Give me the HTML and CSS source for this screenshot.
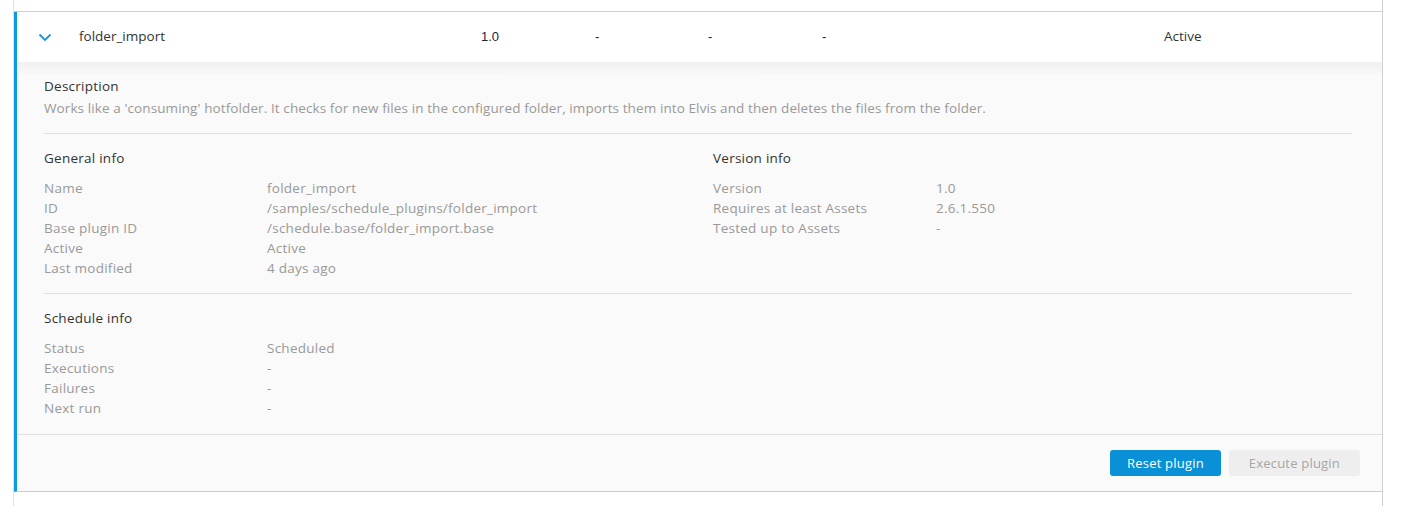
FILE: index.html
```html
<!DOCTYPE html>
<html>
<head>
    <title>Plugins</title>
    <link rel="stylesheet" href="styles.css">
</head>
<body>
    <div class="plugin-list">
        <div class="plugin-prev"></div>
        <div class="plugin open">
            <div class="plugin-row">
                <div class="cell toggle">
                    <svg width="14" height="9" viewBox="0 0 14 9"><polyline points="1.5,1.5 7,7 12.5,1.5" fill="none" stroke="#1a96d4" stroke-width="1.8"/></svg>
                </div>
                <div class="cell">folder_import</div>
                <div class="cell num">1.0</div>
                <div class="cell num">-</div>
                <div class="cell num">-</div>
                <div class="cell num">-</div>
                <div class="cell">Active</div>
            </div>
            <div class="plugin-details">
                <div class="section">
                    <div class="section-title">Description</div>
                    <p class="description">Works like a 'consuming' hotfolder. It checks for new files in the configured folder, imports them into Elvis and then deletes the files from the folder.</p>
                </div>
                <div class="section columns">
                    <div>
                        <div class="section-title">General info</div>
                        <dl class="props">
                            <dt>Name</dt><dd>folder_import</dd>
                            <dt>ID</dt><dd>/samples/schedule_plugins/folder_import</dd>
                            <dt>Base plugin ID</dt><dd>/schedule.base/folder_import.base</dd>
                            <dt>Active</dt><dd>Active</dd>
                            <dt>Last modified</dt><dd>4 days ago</dd>
                        </dl>
                    </div>
                    <div>
                        <div class="section-title">Version info</div>
                        <dl class="props">
                            <dt>Version</dt><dd>1.0</dd>
                            <dt>Requires at least Assets</dt><dd>2.6.1.550</dd>
                            <dt>Tested up to Assets</dt><dd>-</dd>
                        </dl>
                    </div>
                </div>
                <div class="section last">
                    <div class="section-title">Schedule info</div>
                    <dl class="props">
                        <dt>Status</dt><dd>Scheduled</dd>
                        <dt>Executions</dt><dd>-</dd>
                        <dt>Failures</dt><dd>-</dd>
                        <dt>Next run</dt><dd>-</dd>
                    </dl>
                </div>
            </div>
            <div class="plugin-actions">
                <button class="btn primary">Reset plugin</button>
                <button class="btn" disabled>Execute plugin</button>
            </div>
        </div>
    </div>
</body>
</html>
```

FILE: styles.css
```css
body {
    margin: 0;
    background-color: white;
    font-family: "Open Sans", "Liberation Sans", sans-serif;
    font-size: 13.5px;
    letter-spacing: 0.25px;
    color: #333;
}
.plugin-list {
    margin-left: 13px;
    width: 1368px;
    min-height: 100vh;
    border-left: 1px solid #e2e2e2;
    border-right: 1px solid #cfcfcf;
}
.plugin-prev {
    height: 11px;
    border-bottom: 1px solid #cfcfcf;
}
.plugin {
    border-bottom: 1px solid #cccccc;
}
.plugin.open {
    border-left: 3px solid #0b9be0;
}
.plugin-row {
    display: grid;
    grid-template-columns: 62px 402px 114px 113px 114px 342px 1fr;
    align-items: center;
    height: 48px;
    padding-bottom: 2px;
    background-color: white;
    letter-spacing: 0;
}
.toggle {
    padding-left: 21px;
    padding-top: 2px;
    display: flex;
    align-items: center;
}
.num {
    font-family: "Liberation Sans", Arial, sans-serif;
    font-size: 13px;
    color: #23233a;
}
/* Expanded panel */
.plugin-details {
    padding: 14px 30px 0 27px;
    background: linear-gradient(#f0f0f0, #fafafa 14px);
}
.section {
    padding-bottom: 15px;
    border-bottom: 1px solid #e0e0e0;
    margin-bottom: 14px;
}
.section.last {
    border-bottom: none;
    margin-bottom: 0;
    padding-bottom: 16px;
}
.section-title {
    line-height: 20px;
    color: #333;
}
.description {
    margin: 2px 0 0;
    line-height: 20px;
    letter-spacing: 0.1px;
    color: #999;
}
.columns {
    display: grid;
    grid-template-columns: 1fr 1fr;
    column-gap: 30px;
}
.props {
    display: grid;
    grid-template-columns: 223px 1fr;
    margin: 10px 0 0;
    line-height: 20px;
    color: #999;
}
.props dt, .props dd {
    margin: 0;
}
.plugin-actions {
    display: flex;
    justify-content: flex-end;
    gap: 8px;
    padding: 15px 22px 15px 0;
    border-top: 1px solid #e0e0e0;
    background-color: #fafafa;
}
.btn {
    height: 26px;
    padding: 0 20px;
    border: none;
    border-radius: 3px;
    font-family: "Open Sans", "Liberation Sans", sans-serif;
    font-size: 13px;
    letter-spacing: 0.2px;
    background-color: #eeeeee;
    color: #a6a6a6;
}
.btn.primary {
    padding: 0 17px;
    background-color: #0a90d6;
    color: white;
}
```
